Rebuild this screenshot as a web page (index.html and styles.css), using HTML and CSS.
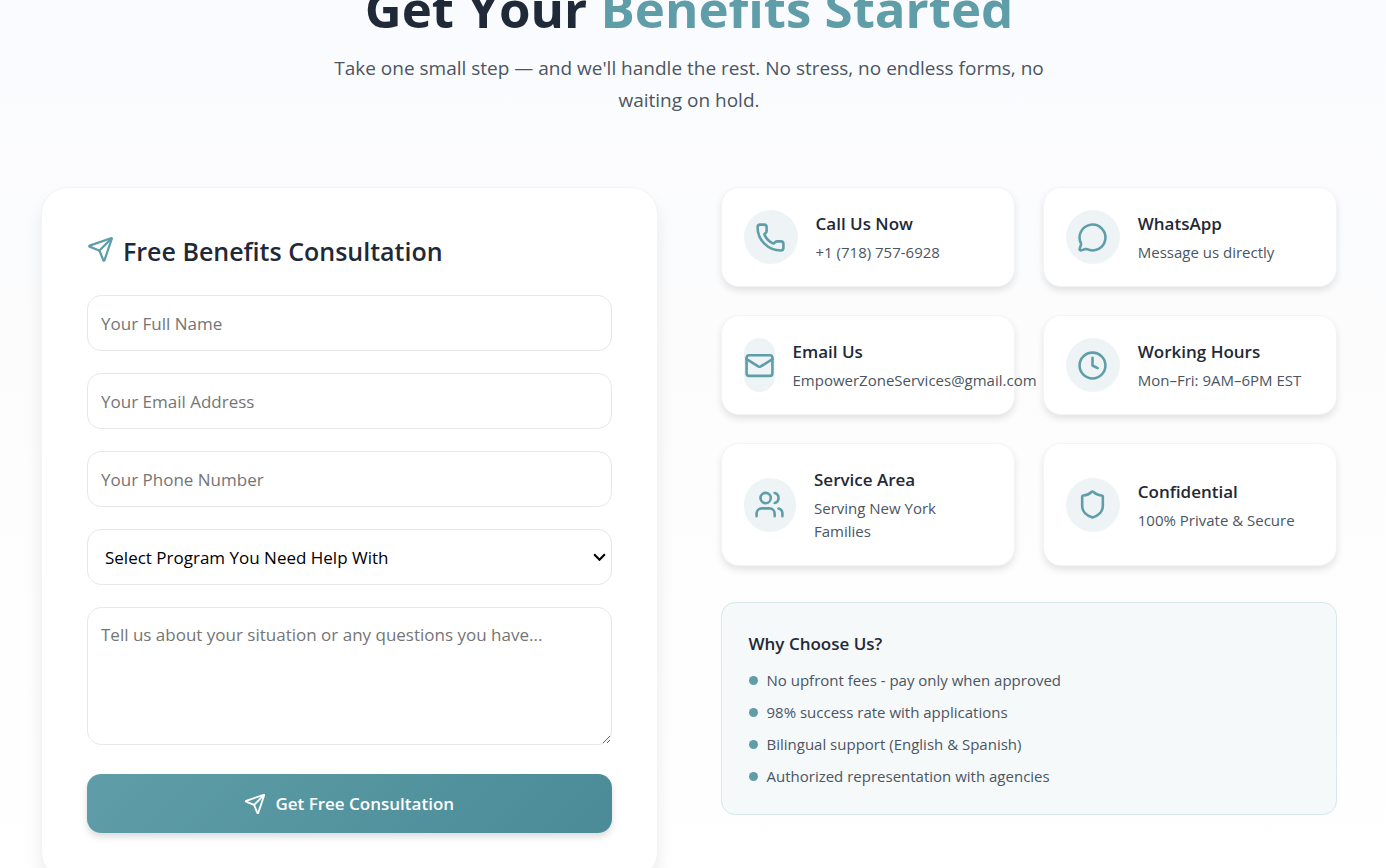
FILE: index.html
```html
<!DOCTYPE html>
<html lang="en">
<head>
<meta charset="utf-8">
<meta name="viewport" content="width=device-width, initial-scale=1">
<title>Get Your Benefits Started</title>
<link rel="stylesheet" href="styles.css">
</head>
<body>
<section class="contact">
  <header class="intro">
    <h1 class="intro-title">Get Your <span class="accent">Benefits Started</span></h1>
    <p class="intro-text">Take one small step — and we'll handle the rest. No stress, no endless forms, no waiting on hold.</p>
  </header>
  <div class="columns">
    <form class="form-card">
      <h2 class="form-title">
        <svg class="icon icon-title" viewBox="0 0 24 24"><path d="M14.536 21.686a.5.5 0 0 0 .937-.024l6.5-19a.496.496 0 0 0-.635-.635l-19 6.5a.5.5 0 0 0-.024.937l7.93 3.18a2 2 0 0 1 1.112 1.11z"/><path d="m21.854 2.147-10.94 10.939"/></svg>
        Free Benefits Consultation
      </h2>
      <div class="fields">
        <input class="field" type="text" placeholder="Your Full Name" aria-label="Your Full Name">
        <input class="field" type="email" placeholder="Your Email Address" aria-label="Your Email Address">
        <input class="field" type="tel" placeholder="Your Phone Number" aria-label="Your Phone Number">
        <div class="select-wrap">
          <select class="field field-select" aria-label="Program">
            <option>Select Program You Need Help With</option>
          </select>
          <svg class="chevron" viewBox="0 0 14 10"><path d="M2 2l5 5 5-5"/></svg>
        </div>
        <textarea class="field field-area" placeholder="Tell us about your situation or any questions you have..." aria-label="Your situation or questions"></textarea>
        <button class="submit" type="submit">
          <svg class="icon icon-button" viewBox="0 0 24 24"><path d="M14.536 21.686a.5.5 0 0 0 .937-.024l6.5-19a.496.496 0 0 0-.635-.635l-19 6.5a.5.5 0 0 0-.024.937l7.93 3.18a2 2 0 0 1 1.112 1.11z"/><path d="m21.854 2.147-10.94 10.939"/></svg>
          Get Free Consultation
        </button>
      </div>
    </form>
    <div class="side">
      <div class="info-grid">
        <article class="info">
          <div class="badge"><svg class="icon" viewBox="0 0 24 24"><path d="M13.832 16.568a1 1 0 0 0 1.213-.303l.355-.465A2 2 0 0 1 17 15h3a2 2 0 0 1 2 2v3a2 2 0 0 1-2 2A18 18 0 0 1 2 4a2 2 0 0 1 2-2h3a2 2 0 0 1 2 2v3a2 2 0 0 1-.8 1.6l-.468.351a1 1 0 0 0-.292 1.233 14 14 0 0 0 6.392 6.384"/></svg></div>
          <div><h3 class="info-title">Call Us Now</h3><p class="info-text">+1 (718) 757-6928</p></div>
        </article>
        <article class="info">
          <div class="badge"><svg class="icon" viewBox="0 0 24 24"><path d="M2.992 16.342a2 2 0 0 1 .094 1.167l-1.065 3.29a1 1 0 0 0 1.236 1.168l3.413-.998a2 2 0 0 1 1.099.092 10 10 0 1 0-4.777-4.719"/></svg></div>
          <div><h3 class="info-title">WhatsApp</h3><p class="info-text">Message us directly</p></div>
        </article>
        <article class="info">
          <div class="badge"><svg class="icon" viewBox="0 0 24 24"><rect x="2" y="4" width="20" height="16" rx="2"/><path d="m22 7-8.991 5.727a2 2 0 0 1-2.009 0L2 7"/></svg></div>
          <div><h3 class="info-title">Email Us</h3><p class="info-text">EmpowerZoneServices@gmail.com</p></div>
        </article>
        <article class="info">
          <div class="badge"><svg class="icon" viewBox="0 0 24 24"><circle cx="12" cy="12" r="10"/><path d="M12 6v6l4 2"/></svg></div>
          <div><h3 class="info-title">Working Hours</h3><p class="info-text">Mon–Fri: 9AM–6PM EST</p></div>
        </article>
        <article class="info">
          <div class="badge"><svg class="icon" viewBox="0 0 24 24"><path d="M16 21v-2a4 4 0 0 0-4-4H6a4 4 0 0 0-4 4v2"/><path d="M16 3.128a4 4 0 0 1 0 7.744"/><path d="M22 21v-2a4 4 0 0 0-3-3.87"/><circle cx="9" cy="7" r="4"/></svg></div>
          <div><h3 class="info-title">Service Area</h3><p class="info-text">Serving New York Families</p></div>
        </article>
        <article class="info">
          <div class="badge"><svg class="icon" viewBox="0 0 24 24"><path d="M20 13c0 5-3.5 7.5-7.66 8.95a1 1 0 0 1-.67-.01C7.5 20.5 4 18 4 13V6a1 1 0 0 1 1-1c2 0 4.5-1.2 6.24-2.72a1.17 1.17 0 0 1 1.52 0C14.51 3.81 17 5 19 5a1 1 0 0 1 1 1z"/></svg></div>
          <div><h3 class="info-title">Confidential</h3><p class="info-text">100% Private &amp; Secure</p></div>
        </article>
      </div>
      <aside class="why">
        <h3 class="why-title">Why Choose Us?</h3>
        <ul class="why-list">
          <li>No upfront fees - pay only when approved</li>
          <li>98% success rate with applications</li>
          <li>Bilingual support (English &amp; Spanish)</li>
          <li>Authorized representation with agencies</li>
        </ul>
      </aside>
    </div>
  </div>
</section>
</body>
</html>
```
FILE: styles.css
```css
* { box-sizing: border-box; margin: 0; padding: 0; }
html { overflow: hidden; }
body {
  font-family: "Segoe UI", "Open Sans", "Noto Sans", sans-serif;
  color: #1f2937;
  background: linear-gradient(#fafbfe, #fdfdfd 50%, #ffffff);
}
.contact { padding: 0 49px 45px 41px; }
.intro { max-width: 732px; margin: -26px auto 71px; text-align: center; }
.intro-title { font-size: 51px; line-height: 68px; font-weight: 700; margin-bottom: 10px; white-space: nowrap; }
.accent { color: #5f9ea8; }
.intro-text { font-size: 19px; line-height: 32px; color: #4b5563; }
.columns { display: grid; grid-template-columns: 1fr 1fr; gap: 63px; align-items: start; }
.icon {
  width: 31px; height: 31px; flex-shrink: 0; display: block;
  fill: none; stroke: #5f9ea8; stroke-width: 2; stroke-linecap: round; stroke-linejoin: round;
}
.form-card {
  padding: 45px; background: #fff; border: 1px solid #f3f4f6; border-radius: 27px;
  box-shadow: 0 11px 17px rgba(0, 0, 0, .08);
}
.form-title {
  display: flex; gap: 9px; font-size: 25px; line-height: 36px; font-weight: 600; margin-bottom: 26px;
}
.icon-title { width: 27px; height: 27px; margin-top: 3px; }
.fields { display: flex; flex-direction: column; gap: 22px; }
.field {
  width: 100%; height: 56px; padding: 13px; font: inherit; font-size: 17px; line-height: 27px;
  color: #000; background: #fff; border: 1px solid #e5e7eb; border-radius: 14px;
}
.field::placeholder { color: #757575; }
.select-wrap { display: grid; position: relative; }
.field-select { appearance: none; padding: 13px 32px 13px 17px; }
.chevron {
  position: absolute; right: 5px; top: 23px; width: 15px; height: 11px; pointer-events: none;
  fill: none; stroke: #000; stroke-width: 2;
}
.field-area { display: block; height: 138px; resize: vertical; margin-bottom: 7px; }
.submit {
  display: flex; align-items: center; justify-content: center; gap: 9px; height: 59px;
  font: inherit; font-size: 17px; font-weight: 600; color: #fff; border: 0; border-radius: 14px;
  background: linear-gradient(135deg, #5f9ea8, #4a8b97);
  box-shadow: 0 4px 7px rgba(0, 0, 0, .14);
}
.icon-button { width: 22px; height: 22px; stroke: #fff; }
.side { display: grid; gap: 36px; }
.info-grid { display: grid; grid-template-columns: 1fr 1fr; gap: 28px; }
.info {
  display: flex; align-items: center; gap: 18px; padding: 22px; min-width: 0;
  background: #fff; border: 1px solid #f3f4f6; border-radius: 18px;
  box-shadow: 0 4px 7px rgba(0, 0, 0, .1);
}
.badge {
  display: flex; align-items: center; justify-content: center; width: 54px; height: 54px;
  border-radius: 27px; background: #eef4f6;
}
.info-title { font-size: 17px; line-height: 27px; font-weight: 600; margin-bottom: 4px; }
.info-text { font-size: 15px; line-height: 23px; color: #4b5563; }
.why { padding: 27px 27px 26px; background: #f5f9fa; border: 1px solid #d7e7ea; border-radius: 14px; }
.why-title { font-size: 17px; line-height: 27px; font-weight: 600; margin-bottom: 12px; }
.why-list { display: grid; gap: 9px; list-style: none; font-size: 15px; line-height: 23px; color: #4b5563; }
.why-list li { display: flex; align-items: center; gap: 9px; }
.why-list li::before { content: ""; width: 9px; height: 9px; border-radius: 50%; background: #5f9ea8; }
```
